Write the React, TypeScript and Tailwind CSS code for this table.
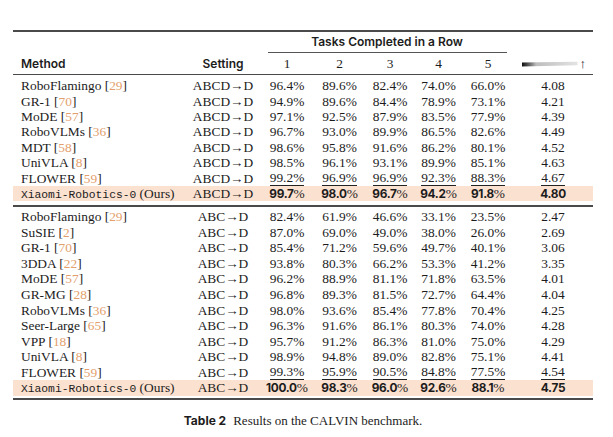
import React from "react";

type Row = {
  name: string;
  cite?: string;
  mono?: boolean;
  setting: string;
  vals: string[];
  avg: string;
  kind?: "best" | "second";
};

const abcd: Row[] = [
  { name: "RoboFlamingo", cite: "29", setting: "ABCD→D", vals: ["96.4", "89.6", "82.4", "74.0", "66.0"], avg: "4.08" },
  { name: "GR-1", cite: "70", setting: "ABCD→D", vals: ["94.9", "89.6", "84.4", "78.9", "73.1"], avg: "4.21" },
  { name: "MoDE", cite: "57", setting: "ABCD→D", vals: ["97.1", "92.5", "87.9", "83.5", "77.9"], avg: "4.39" },
  { name: "RoboVLMs", cite: "36", setting: "ABCD→D", vals: ["96.7", "93.0", "89.9", "86.5", "82.6"], avg: "4.49" },
  { name: "MDT", cite: "58", setting: "ABCD→D", vals: ["98.6", "95.8", "91.6", "86.2", "80.1"], avg: "4.52" },
  { name: "UniVLA", cite: "8", setting: "ABCD→D", vals: ["98.5", "96.1", "93.1", "89.9", "85.1"], avg: "4.63" },
  { name: "FLOWER", cite: "59", setting: "ABCD→D", vals: ["99.2", "96.9", "96.9", "92.3", "88.3"], avg: "4.67", kind: "second" },
  { name: "Xiaomi-Robotics-0", mono: true, setting: "ABCD→D", vals: ["99.7", "98.0", "96.7", "94.2", "91.8"], avg: "4.80", kind: "best" },
];

const abc: Row[] = [
  { name: "RoboFlamingo", cite: "29", setting: "ABC→D", vals: ["82.4", "61.9", "46.6", "33.1", "23.5"], avg: "2.47" },
  { name: "SuSIE", cite: "2", setting: "ABC→D", vals: ["87.0", "69.0", "49.0", "38.0", "26.0"], avg: "2.69" },
  { name: "GR-1", cite: "70", setting: "ABC→D", vals: ["85.4", "71.2", "59.6", "49.7", "40.1"], avg: "3.06" },
  { name: "3DDA", cite: "22", setting: "ABC→D", vals: ["93.8", "80.3", "66.2", "53.3", "41.2"], avg: "3.35" },
  { name: "MoDE", cite: "57", setting: "ABC→D", vals: ["96.2", "88.9", "81.1", "71.8", "63.5"], avg: "4.01" },
  { name: "GR-MG", cite: "28", setting: "ABC→D", vals: ["96.8", "89.3", "81.5", "72.7", "64.4"], avg: "4.04" },
  { name: "RoboVLMs", cite: "36", setting: "ABC→D", vals: ["98.0", "93.6", "85.4", "77.8", "70.4"], avg: "4.25" },
  { name: "Seer-Large", cite: "65", setting: "ABC→D", vals: ["96.3", "91.6", "86.1", "80.3", "74.0"], avg: "4.28" },
  { name: "VPP", cite: "18", setting: "ABC→D", vals: ["95.7", "91.2", "86.3", "81.0", "75.0"], avg: "4.29" },
  { name: "UniVLA", cite: "8", setting: "ABC→D", vals: ["98.9", "94.8", "89.0", "82.8", "75.1"], avg: "4.41" },
  { name: "FLOWER", cite: "59", setting: "ABC→D", vals: ["99.3", "95.9", "90.5", "84.8", "77.5"], avg: "4.54", kind: "second" },
  { name: "Xiaomi-Robotics-0", mono: true, setting: "ABC→D", vals: ["100.0", "98.3", "96.0", "92.6", "88.1"], avg: "4.75", kind: "best" },
];

// widths of the five "tasks" columns
const colW = ["w-[52px]", "w-[53px]", "w-[48px]", "w-[49px]", "w-[50px]"];

const serif = "font-['Liberation_Serif',serif]";
const sans = "font-['Inter',sans-serif]";

function Cell(props: { v: string; pct?: boolean; kind?: Row["kind"] }) {
  const { v, pct, kind } = props;
  if (kind === "best") {
    return (
      <span>
        <span className={`${sans} font-bold text-[11.8px] tracking-[-0.3px]`}>{v}</span>
        {pct && <span className={serif}>%</span>}
      </span>
    );
  }
  if (kind === "second") {
    return (
      <span className="inline-block border-b border-[#222] pb-[1px] leading-[12px]">
        {v}
        {pct && "%"}
      </span>
    );
  }
  return (
    <span>
      {v}
      {pct && "%"}
    </span>
  );
}

function TableRow({ r, h }: { r: Row; h: string }) {
  return (
    <div className={`flex items-center ${h} ${r.kind === "best" ? "bg-[#fbe1d0]" : ""}`}>
      <div className="w-[172px] pl-[8px] whitespace-nowrap">
        {r.mono ? (
          <>
            <span className="font-['Liberation_Mono',monospace] text-[11.3px]">{r.name}</span> (Ours)
          </>
        ) : (
          <>
            {r.name} [<span className="text-[#e3a06c]">{r.cite}</span>]
          </>
        )}
      </div>
      <div className="w-[76px] text-center whitespace-nowrap">{r.setting}</div>
      {r.vals.map((v, i) => (
        <div key={i} className={`${colW[i]} text-center`}>
          <Cell v={v} pct kind={r.kind} />
        </div>
      ))}
      <div className="w-[80px] text-center">
        <Cell v={r.avg} kind={r.kind} />
      </div>
    </div>
  );
}

export default function App() {
  return (
    <div className={`w-[613px] h-[437px] bg-white pt-[30px] text-[#1c1c1c] ${serif} text-[13.4px] leading-none`}>
      <div className="ml-[13px] w-[580px]">
        <div className="h-[1.5px] bg-[#4a4a4a]" />
        <div className="flex items-center h-[20.5px]">
          <div className="w-[248px]" />
          <div className={`w-[252px] text-center ${sans} font-semibold text-[12px]`}>Tasks Completed in a Row</div>
        </div>
        <div className="ml-[255px] w-[239px] h-[1px] bg-[#555]" />
        <div className="flex items-center h-[21px]">
          <div className={`w-[172px] pl-[8px] ${sans} font-semibold text-[12px]`}>Method</div>
          <div className={`w-[76px] text-center ${sans} font-semibold text-[12px]`}>Setting</div>
          {["1", "2", "3", "4", "5"].map((n, i) => (
            <div key={n} className={`${colW[i]} text-center`}>
              {n}
            </div>
          ))}
          <div className="w-[80px] flex items-center justify-end pr-[7px] gap-[2px]">
            <div className="w-[56px] h-[6px] bg-linear-to-r from-[#111] via-[#bdbdbd] via-25% to-[#e4e4e4] blur-[0.7px] [clip-path:polygon(0_35%,100%_20%,100%_80%,0_100%)]" />
            <span className="text-[13px]">↑</span>
          </div>
        </div>
        <div className="h-[1px] bg-[#4a4a4a]" />
        <div className="pt-[3.3px]">
          {abcd.map((r) => (
            <TableRow key={r.name} r={r} h="h-[15.4px]" />
          ))}
        </div>
        <div className="mt-[4px] h-[1.5px] bg-[#4a4a4a]" />
        <div className="pt-[2.3px]">
          {abc.map((r) => (
            <TableRow key={r.name} r={r} h="h-[15.55px]" />
          ))}
        </div>
        <div className="mt-[2px] h-[2px] bg-[#4a4a4a]" />
        <div className="mt-[14px] text-center text-[13px]">
          <span className={`${sans} font-bold text-[12px]`}>Table 2</span>
          <span className="ml-[7px]">Results on the CALVIN benchmark.</span>
        </div>
      </div>
    </div>
  );
}
